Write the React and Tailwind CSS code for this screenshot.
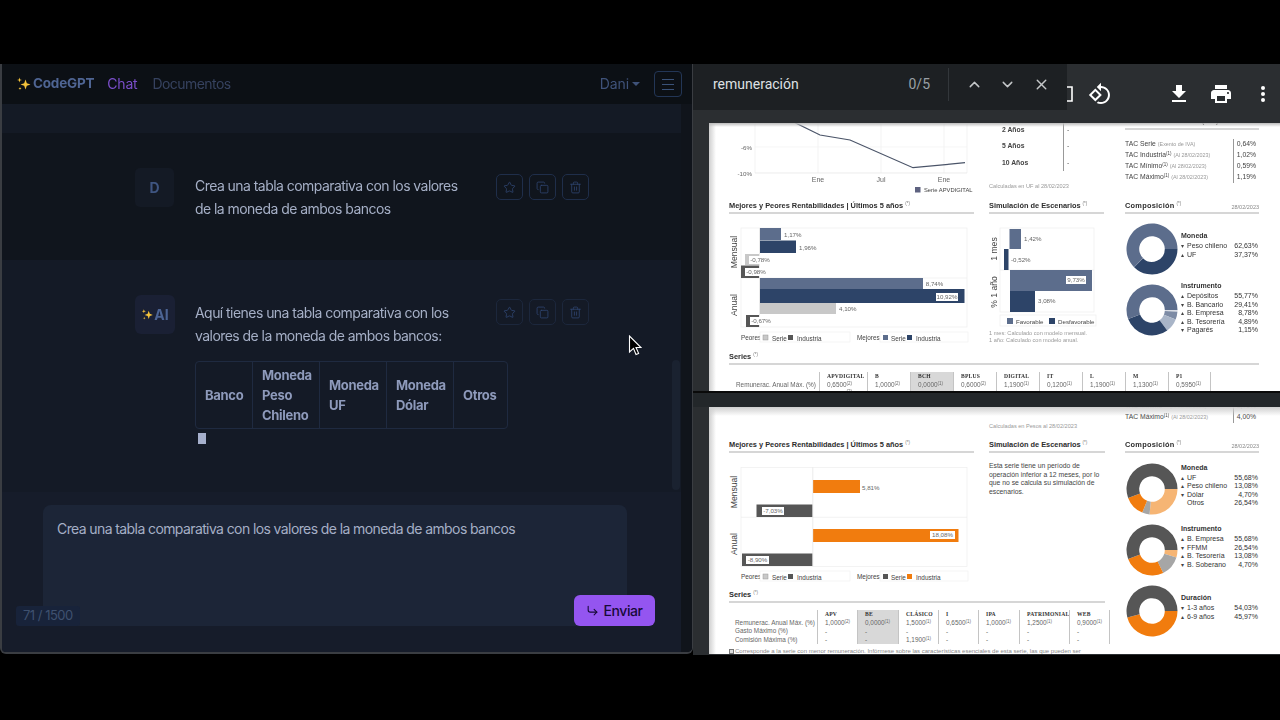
import React from "react";
import { Star, Copy, Trash2, ChevronUp, ChevronDown, X, CornerDownRight } from "lucide-react";

const point = (cx, cy, r, deg) => {
  const a = (deg * Math.PI) / 180;
  return [cx + r * Math.cos(a), cy + r * Math.sin(a)];
};
const arcPath = (cx, cy, R, r, a0, a1) => {
  const large = a1 - a0 > 180 ? 1 : 0;
  const [x0, y0] = point(cx, cy, R, a0);
  const [x1, y1] = point(cx, cy, R, a1);
  const [x2, y2] = point(cx, cy, r, a1);
  const [x3, y3] = point(cx, cy, r, a0);
  return `M${x0} ${y0}A${R} ${R} 0 ${large} 1 ${x1} ${y1}L${x2} ${y2}A${r} ${r} 0 ${large} 0 ${x3} ${y3}Z`;
};

function Donut({ segs }) {
  let a = 0;
  return (
    <svg width="52" height="52" viewBox="0 0 52 52" className="shrink-0">
      {segs.map(([p, c], i) => {
        const a0 = a;
        a += p * 3.6;
        return <path key={i} d={arcPath(26, 26, 25.5, 12.8, a0, a - 0.01)} fill={c} />;
      })}
    </svg>
  );
}

function DonutBlock({ segs, title, rows, className, top }) {
  return (
    <div className={`flex ${className}`}>
      <Donut segs={segs} />
      <div className={`ml-[3px] w-[77px] text-[7px] leading-[7.5px] text-[#333] ${top}`}>
        <div className="mb-[2px] font-bold leading-[8px]">{title}</div>
        {rows.map(([m, n, v]) => (
          <div key={n} className="flex justify-between">
            <span>
              <span className="inline-block w-[6px] text-[6px] text-[#444]">{m}</span>
              {n}
            </span>
            <span>{v}</span>
          </div>
        ))}
      </div>
    </div>
  );
}

function Heading({ children, note, right, className = "" }) {
  return (
    <div className={`relative flex h-[15px] items-center border-b-[2.5px] border-[#d6d6d6] text-[7.4px] font-bold text-[#2d2d2d] ${className}`}>
      <span>{children}</span>
      {note && <span className="ml-[2px] -mt-[3px] text-[4.5px] font-normal text-[#777]">(*)</span>}
      {right && <span className="ml-auto mt-[4px] text-[5.5px] font-normal text-[#888]">{right}</span>}
    </div>
  );
}

const Sup = ({ n }) => <sup className="text-[4.5px] leading-none">({n})</sup>;

function TacRow({ name, sup, note, value }) {
  return (
    <div className="flex h-[11px] items-center whitespace-nowrap text-[6.8px] text-[#444]">
      <span className="w-[108px] overflow-hidden">
        {name}
        {sup && <Sup n={sup} />} <span className="text-[5.4px] text-[#999]">{note}</span>
      </span>
      <span className="flex h-full w-[26px] items-center justify-end border-l border-[#999] pr-[3px]">{value}</span>
    </div>
  );
}

function SerieCol({ w, name, shade, rows }) {
  return (
    <div className={`shrink-0 ${w} border-l border-[#c4c4c4] pl-[7px] ${shade ? "bg-[#d8d8d8]" : ""}`}>
      <div className="h-[8px] whitespace-nowrap font-['Liberation_Serif',serif] text-[5.6px] font-bold leading-[8px] tracking-[0.2px] text-[#333]">{name}</div>
      {rows.map((r, i) => (
        <div key={i} className="h-[8.6px] whitespace-nowrap text-[6.4px] leading-[9px] text-[#666]">
          {r[0]}
          {r[1] && <Sup n={r[1]} />}
        </div>
      ))}
    </div>
  );
}

const NAVY = "#2d4468";
const SLATE = "#5c6d8c";
const LG = "#c8c8c8";
const DG = "#565656";
const OR = "#f17c0e";

const T = ({ x, y, children, size = 6.2, fill = "#666", anchor, weight }) => (
  <text x={x} y={y} fontSize={size} fill={fill} textAnchor={anchor} fontWeight={weight}>{children}</text>
);
const Label = ({ x, y, w = 21, children }) => (
  <g>
    <rect x={x} y={y} width={w} height={8} fill="#fff" />
    <T x={x + w / 2} y={y + 6} anchor="middle">{children}</T>
  </g>
);
const VT = ({ x, y, children }) => (
  <text transform={`translate(${x} ${y}) rotate(-90)`} fontSize="8.6" fill="#444" textAnchor="middle">{children}</text>
);

function ChartLegend({ y, a, b, c, d }) {
  return (
    <g>
      <T x={741} y={y + 2} size={6.4} fill="#444">Peores</T>
      <rect x={760} y={y - 6} width={90} height={10} fill="#fff" stroke="#efefef" strokeWidth="0.6" />
      <rect x={763} y={y - 3} width={5} height={5} fill={a} stroke="#999" strokeWidth="0.5" />
      <T x={772} y={y + 3} size={6.4} fill="#444">Serie</T>
      <rect x={788} y={y - 3} width={5} height={5} fill={b} />
      <T x={797} y={y + 3} size={6.4} fill="#444">Industria</T>
      <T x={857} y={y + 2} size={6.4} fill="#444">Mejores</T>
      <rect x={880} y={y - 6} width={88} height={10} fill="#fff" stroke="#efefef" strokeWidth="0.6" />
      <rect x={883} y={y - 3} width={5} height={5} fill={c} />
      <T x={891} y={y + 3} size={6.4} fill="#444">Serie</T>
      <rect x={907} y={y - 3} width={5} height={5} fill={d} />
      <T x={916} y={y + 3} size={6.4} fill="#444">Industria</T>
    </g>
  );
}

function Bar({ x0, x1, y0, y1, c }) {
  return <rect x={x0} y={y0} width={x1 - x0} height={y1 - y0} fill={c} />;
}

function PageOne() {
  const rows = (a, b) => [[a, b]];
  return (
    <div className="relative h-[268px] overflow-hidden bg-white pl-[20px] font-['Liberation_Sans',sans-serif]">
      <div className="flex h-[76px]">
        <svg width="260" height="76" viewBox="729 123 260 76" className="shrink-0">
          {[818, 881, 944, 967].map((x) => <line key={x} x1={x} x2={x} y1={123} y2={173} stroke="#eee" strokeWidth="0.7" />)}
          <line x1={755} x2={755} y1={123} y2={173} stroke="#eee" strokeWidth="0.7" />
          <line x1={755} x2={967} y1={173} y2={173} stroke="#e4e4e4" strokeWidth="0.7" />
          <line x1={755} x2={967} y1={147} y2={147} stroke="#f2f2f2" strokeWidth="0.7" />
          <polyline points="795,122.7 820,135 850,140 913,167.7 965,162.7" fill="none" stroke="#4a5468" strokeWidth="1.2" />
          <T x={752} y={149.5} anchor="end">-6%</T>
          <T x={752} y={176} anchor="end">-10%</T>
          <T x={818} y={182} size={7} anchor="middle">Ene</T>
          <T x={881} y={182} size={7} anchor="middle">Jul</T>
          <T x={944} y={182} size={7} anchor="middle">Ene</T>
          <rect x={915} y={187} width={5.5} height={5.5} fill="#5e6280" />
          <T x={924} y={192} size={5.8} fill="#444">Serie APVDIGITAL</T>
        </svg>
        <div className="mr-[21px] w-[115px] shrink-0">
          <div className="-mt-[1px] pl-[13px] text-[6.8px] font-bold text-[#444]">
            {["2 Años", "5 Años", "10 Años"].map((t) => (
              <div key={t} className="flex h-[16.3px] items-center">
                <span className="w-[61px]">{t}</span>
                <span className="flex h-full items-center border-l border-[#999] pl-[3px] font-normal">-</span>
              </div>
            ))}
          </div>
          <div className="mt-[11px] text-[5.6px] text-[#999]">Calculadas en UF al 28/02/2023</div>
        </div>
        <div className="w-[134px] shrink-0">
          <div className="-mt-[8px] h-[15px] border-b-[2px] border-[#d6d6d6] text-[7.4px] font-bold text-[#2d2d2d]">TAC Anual de Costos (IVA)</div>
          <div className="mt-[9px]">
            <TacRow name="TAC Serie" note="(Exento de IVA)" value="0,64%" />
            <TacRow name="TAC Industria" sup="1" note="(Al 28/02/2023)" value="1,02%" />
            <TacRow name="TAC Mínimo" sup="1" note="(Al 28/02/2023)" value="0,59%" />
            <TacRow name="TAC Máximo" sup="1" note="(Al 28/02/2023)" value="1,19%" />
          </div>
        </div>
      </div>
      <div className="flex h-[151px]">
        <div className="mr-[15px] w-[245px] shrink-0">
          <Heading note>Mejores y Peores Rentabilidades | Últimos 5 años</Heading>
          <svg width="245" height="130" viewBox="729 214 245 130" className="block">
            <rect x={741} y={228} width={226} height={99} fill="#fff" stroke="#eee" strokeWidth="0.7" />
            <line x1={741} x2={967} y1={278} y2={278} stroke="#eee" strokeWidth="0.7" />
            <Bar x0={760} x1={781} y0={228} y1={240} c={SLATE} />
            <Bar x0={760} x1={796} y0={240.5} y1={253} c={NAVY} />
            <Bar x0={745} x1={759} y0={254} y1={265} c={LG} />
            <Bar x0={741} x1={759} y0={265.5} y1={278} c={DG} />
            <Bar x0={760} x1={923} y0={278} y1={289} c={SLATE} />
            <Bar x0={760} x1={964.5} y0={289} y1={303} c={NAVY} />
            <Bar x0={760} x1={836} y0={303} y1={314} c={LG} />
            <Bar x0={746} x1={759} y0={315} y1={327} c={DG} />
            <line x1={759.5} x2={759.5} y1={228} y2={327} stroke="#ddd" strokeWidth="0.6" />
            <T x={784} y={237}>1,17%</T>
            <T x={799} y={250}>1,96%</T>
            <Label x={749} y={256} w={22}>-0,78%</Label>
            <Label x={745} y={268} w={22}>-0,98%</Label>
            <Label x={925} y={280} w={19}>8,74%</Label>
            <Label x={936} y={293} w={22}>10,92%</Label>
            <T x={839} y={311}>4,10%</T>
            <Label x={750} y={317} w={22}>-0,67%</Label>
            <VT x={737} y={252}>Mensual</VT>
            <VT x={737} y={305}>Anual</VT>
            <ChartLegend y={338} a={LG} b={DG} c={SLATE} d={NAVY} />
          </svg>
        </div>
        <div className="mr-[21px] w-[115px] shrink-0">
          <Heading note>Simulación de Escenarios</Heading>
          <svg width="115" height="114" viewBox="989 214 115 114" className="block">
            <rect x={1000} y={228} width={94} height={84} fill="#fff" stroke="#eee" strokeWidth="0.7" />
            <line x1={1000} x2={1094} y1={270} y2={270} stroke="#eee" strokeWidth="0.7" />
            <Bar x0={1009.5} x1={1021} y0={229} y1={249} c={SLATE} />
            <Bar x0={1004} x1={1008.5} y0={249} y1={270} c={NAVY} />
            <Bar x0={1010} x1={1092} y0={270} y1={291} c={SLATE} />
            <Bar x0={1010} x1={1035} y0={291} y1={312} c={NAVY} />
            <T x={1024} y={241}>1,42%</T>
            <T x={1011} y={262}>-0,52%</T>
            <Label x={1066} y={276} w={20}>9,73%</Label>
            <T x={1038} y={303}>3,08%</T>
            <VT x={997} y={249}>1 mes</VT>
            <VT x={997} y={292}>% 1 año</VT>
            <rect x={1000} y={315} width={96} height={11} fill="#fff" stroke="#eee" strokeWidth="0.7" />
            <rect x={1007} y={318} width={6} height={6} fill={SLATE} />
            <T x={1016} y={324} fill="#444">Favorable</T>
            <rect x={1049} y={318} width={6} height={6} fill={NAVY} />
            <T x={1058} y={324} fill="#444">Desfavorable</T>
          </svg>
          <div className="mt-[2px] text-[5.6px] leading-[6.5px] text-[#999]">
            <div>1 mes: Calculado con modelo mensual.</div>
            <div>1 año: Calculado con modelo anual.</div>
          </div>
        </div>
        <div className="w-[134px] shrink-0">
          <Heading note right="28/02/2023"><span className="tracking-[0.25px]">Composición</span></Heading>
          <div className="mt-[9px] pl-[1px]">
            <DonutBlock
              segs={[[37.37, NAVY], [62.63, SLATE]]}
              title="Moneda"
              rows={[["▾", "Peso chileno", "62,63%"], ["▴", "UF", "37,37%"]]}
              className="mb-[9px]"
              top="mt-[9px]"
            />
            <DonutBlock
              segs={[[1.15, "#d9dde5"], [4.89, "#7d8ba5"], [8.78, "#a9b5c8"], [29.41, NAVY], [55.77, SLATE]]}
              title="Instrumento"
              rows={[["▴", "Depósitos", "55,77%"], ["▾", "B. Bancario", "29,41%"], ["▴", "B. Empresa", "8,78%"], ["▴", "B. Tesorería", "4,89%"], ["▾", "Pagarés", "1,15%"]]}
              top="-mt-[2px]"
            />
          </div>
        </div>
      </div>
      <Heading note className="w-[530px]">Series</Heading>
      <div className="mt-[7px] flex h-[40px] text-[6.4px]">
        <div className="w-[90px] shrink-0 pl-[7px] pt-[8px] leading-[9px] text-[#666]">Remunerac. Anual Máx. (%)</div>
        <SerieCol w="w-[48px]" name="APVDIGITAL" rows={[["0,6500", "2"], ["0,6500", "2"]]} />
        <SerieCol w="w-[43px]" name="B" rows={rows("1,0000", "2")} />
        <SerieCol w="w-[43px]" name="BCH" shade rows={rows("0,0000", "1")} />
        <SerieCol w="w-[43px]" name="BPLUS" rows={rows("0,6000", "2")} />
        <SerieCol w="w-[43px]" name="DIGITAL" rows={rows("1,1900", "1")} />
        <SerieCol w="w-[43px]" name="IT" rows={rows("0,1200", "1")} />
        <SerieCol w="w-[43px]" name="L" rows={rows("1,1900", "1")} />
        <SerieCol w="w-[43px]" name="M" rows={rows("1,1300", "1")} />
        <SerieCol w="w-[42px]" name="P1" rows={rows("0,5950", "1")} />
        <div className="border-l border-[#c4c4c4]" />
      </div>
      <div className="absolute inset-y-0 left-0 w-[7px] bg-gradient-to-r from-[#cfcfcf] to-white" />
      <div className="absolute inset-x-0 top-0 h-[4px] bg-gradient-to-b from-[#bbb] to-transparent" />
    </div>
  );
}

function PageTwo() {
  const d = ["-", null];
  return (
    <div className="relative h-[247px] overflow-hidden bg-white pl-[20px] font-['Liberation_Sans',sans-serif]">
      <div className="flex">
        <div className="mr-[20px] w-[376px] shrink-0">
          <div className="h-[31px] pl-[260px] pt-[15px] text-[5.6px] leading-[8px] text-[#999]">Calculadas en Pesos al 28/02/2023</div>
          <div className="flex h-[150px]">
            <div className="mr-[15px] w-[245px] shrink-0">
              <Heading note>Mejores y Peores Rentabilidades | Últimos 5 años</Heading>
              <svg width="245" height="130" viewBox="729 453 245 130" className="block">
                <rect x={741} y={467.5} width={226} height={99} fill="#fff" stroke="#eee" strokeWidth="0.7" />
                <line x1={741} x2={967} y1={517.3} y2={517.3} stroke="#eee" strokeWidth="0.7" />
                <Bar x0={813} x1={860} y0={480} y1={493} c={OR} />
                <Bar x0={756.5} x1={812.5} y0={504.5} y1={517} c={DG} />
                <Bar x0={813} x1={958.5} y0={529} y1={542} c={OR} />
                <Bar x0={742} x1={812.5} y0={553.5} y1={566} c={DG} />
                <line x1={812.8} x2={812.8} y1={467.5} y2={566.5} stroke="#ddd" strokeWidth="0.6" />
                <T x={862} y={489.5}>5,81%</T>
                <Label x={762} y={507} w={22}>-7,03%</Label>
                <Label x={930} y={531} w={25}>18,08%</Label>
                <Label x={746} y={556} w={23}>-8,90%</Label>
                <VT x={737} y={492}>Mensual</VT>
                <VT x={737} y={544}>Anual</VT>
                <ChartLegend y={577} a={LG} b={DG} c={DG} d={OR} />
              </svg>
            </div>
            <div className="w-[116px] shrink-0">
              <Heading note>Simulación de Escenarios</Heading>
              <p className="mt-[9px] text-[6.8px] leading-[8.7px] text-[#444]">Esta serie tiene un período de operación inferior a 12 meses, por lo que no se calcula su simulación de escenarios.</p>
            </div>
          </div>
          <Heading note>Series</Heading>
          <div className="mt-[7px] flex h-[34px] text-[6.4px]">
            <div className="w-[88px] shrink-0 pl-[6px] pt-[8.6px] leading-[8.6px] text-[#666]">
              <div>Remunerac. Anual Máx. (%)</div>
              <div>Gasto Máximo (%)</div>
              <div>Comisión Máxima (%)</div>
            </div>
            <SerieCol w="w-[40px]" name="APV" rows={[["1,0000", "2"], d, d]} />
            <SerieCol w="w-[41px]" name="BE" shade rows={[["0,0000", "1"], d, d]} />
            <SerieCol w="w-[40px]" name="CLÁSICO" rows={[["1,5000", "1"], d, ["1,1900", "1"]]} />
            <SerieCol w="w-[40px]" name="I" rows={[["0,6500", "1"], d, d]} />
            <SerieCol w="w-[41px]" name="IPA" rows={[["1,0000", "1"], d, d]} />
            <SerieCol w="w-[50px]" name="PATRIMONIAL" rows={[["1,2500", "1"], d, d]} />
            <SerieCol w="w-[40px]" name="WEB" rows={[["0,9000", "1"], d, d]} />
            <div className="border-l border-[#c4c4c4]" />
          </div>
          <div className="mt-[4px] flex w-[520px] items-center whitespace-nowrap text-[6px] leading-[7px] text-[#888]">
            <span className="mr-[1px] h-[5px] w-[5px] shrink-0 border border-[#777] bg-[#ddd]" />
            Corresponde a la serie con menor remuneración. Infórmese sobre las características esenciales de esta serie, las que pueden ser
          </div>
        </div>
        <div className="w-[134px] shrink-0">
          <div className="-mt-[6px] h-[37px]">
            <TacRow name="TAC Mínimo" sup="1" note="(Al 28/02/2023)" value="3,75%" />
            <TacRow name="TAC Máximo" sup="1" note="(Al 28/02/2023)" value="4,00%" />
          </div>
          <Heading note right="28/02/2023"><span className="tracking-[0.25px]">Composición</span></Heading>
          <div className="mt-[9.5px] pl-[1px]">
            <DonutBlock
              segs={[[26.54, "#f6b574"], [4.7, "#a6a6a6"], [13.08, OR], [55.68, DG]]}
              title="Moneda"
              rows={[["▴", "UF", "55,68%"], ["▴", "Peso chileno", "13,08%"], ["▾", "Dólar", "4,70%"], ["", "Otros", "26,54%"]]}
              className="mb-[9.5px]"
              top="mt-[1px]"
            />
            <DonutBlock
              segs={[[4.7, "#f6b574"], [13.08, "#a6a6a6"], [26.54, OR], [55.68, DG]]}
              title="Instrumento"
              rows={[["▴", "B. Empresa", "55,68%"], ["▾", "FFMM", "26,54%"], ["▴", "B. Tesorería", "13,08%"], ["▾", "B. Soberano", "4,70%"]]}
              className="mb-[9px]"
              top="mt-[1px]"
            />
            <DonutBlock
              segs={[[45.97, OR], [54.03, DG]]}
              title="Duración"
              rows={[["▾", "1-3 años", "54,03%"], ["▴", "6-9 años", "45,97%"]]}
              top="mt-[9px]"
            />
          </div>
        </div>
      </div>
      <div className="absolute inset-y-0 left-0 w-[7px] bg-gradient-to-r from-[#cfcfcf] to-white" />
      <div className="absolute inset-x-0 top-0 h-[9px] bg-gradient-to-b from-[#cfcfcf] to-transparent" />
    </div>
  );
}

function Sparkle({ className }) {
  return (
    <svg viewBox="0 0 16 16" className={className}>
      <path d="M9.5 3.5 10.8 7.2 14.5 8.5 10.8 9.8 9.5 13.5 8.2 9.8 4.5 8.5 8.2 7.2Z" fill="#f5c33b" />
      <path d="M3.5 1.5 4.1 3.4 6 4 4.1 4.6 3.5 6.5 2.9 4.6 1 4 2.9 3.4Z" fill="#f5c33b" />
      <path d="M4 11 4.4 12.1 5.5 12.5 4.4 12.9 4 14 3.6 12.9 2.5 12.5 3.6 12.1Z" fill="#f5c33b" />
    </svg>
  );
}

function Actions({ dim }) {
  const cls = `flex h-[26px] w-[27px] items-center justify-center rounded-[5px] border ${dim ? "border-[#1c273c]" : "border-[#1f2e4a]"} text-[#2f4570]`;
  return (
    <div className="flex gap-[6px]">
      <div className={cls}><Star size={13} strokeWidth={1.5} /></div>
      <div className={cls}><Copy size={13} strokeWidth={1.5} /></div>
      <div className={cls}><Trash2 size={13} strokeWidth={1.5} /></div>
    </div>
  );
}

function LeftPanel() {
  const heads = [
    ["w-[56px]", ["Banco"]],
    ["w-[67px]", ["Moneda", "Peso", "Chileno"]],
    ["w-[67px]", ["Moneda", "UF"]],
    ["w-[67px]", ["Moneda", "Dólar"]],
    ["w-[54px]", ["Otros"]],
  ];
  return (
    <div className="flex h-[590px] w-[693px] shrink-0 flex-col overflow-hidden rounded-b-[6px] border-b-2 border-l-2 border-r border-[#3a3d42] bg-[#0f1319] font-['Inter',sans-serif] blur-[0.3px]">
      <div className="flex h-[40px] shrink-0 items-center bg-[#0c1015] pl-[14px] pr-[10px]">
        <Sparkle className="-mt-[1px] h-[16px] w-[16px]" />
        <span className="-mt-[1px] ml-[1px] text-[13.5px] font-bold tracking-[-0.2px] text-[#4f6593]">CodeGPT</span>
        <span className="-mt-[2px] ml-[13px] text-[14px] tracking-[-0.2px] text-[#7a4ec9]">Chat</span>
        <span className="-mt-[2px] ml-[15px] text-[14px] tracking-[-0.55px] text-[#36425f]">Documentos</span>
        <span className="ml-auto -mt-[1px] text-[14px] tracking-[-0.1px] text-[#3f5279]">Dani</span>
        <span className="ml-[3px] mr-[14px] h-0 w-0 border-x-[4px] border-t-[4px] border-x-transparent border-t-[#3f5279]" />
        <div className="flex h-[26px] w-[28px] flex-col items-center justify-center gap-[4px] rounded-[4px] border border-[#233656]">
          <span className="h-px w-[12px] bg-[#3a5278]" />
          <span className="h-px w-[12px] bg-[#3a5278]" />
          <span className="h-px w-[12px] bg-[#3a5278]" />
        </div>
      </div>
      <div className="flex min-h-0 flex-1">
        <div className="flex w-[679px] shrink-0 flex-col">
          <div className="h-[29px] shrink-0 bg-[#141a25]" />
          <div className="flex h-[127px] shrink-0 bg-[#10151d] pl-[133px] pt-[35px]">
            <div className="flex h-[39px] w-[39px] shrink-0 items-center justify-center rounded-[5px] bg-[#141a25] text-[14px] font-bold text-[#3f5581]">D</div>
            <p className="ml-[21px] mt-[6px] h-[46px] w-[270px] text-[14px] leading-[23px] tracking-[-0.55px] text-[#a5afc6]">Crea una tabla comparativa con los valores de la moneda de ambos bancos</p>
            <div className="ml-[31px] mt-[6px]"><Actions /></div>
          </div>
          <div className="relative flex h-[232px] shrink-0 bg-[#141a26] pl-[133px] pt-[35px]">
            <div className="flex h-[39px] w-[40px] shrink-0 items-center justify-center rounded-[6px] bg-[#1a2034] text-[14px] font-bold text-[#4c6494]">
              <Sparkle className="h-[13px] w-[13px]" />AI
            </div>
            <div className="ml-[20px] w-[313px] shrink-0 pt-[6px]">
              <p className="w-[270px] text-[14px] leading-[23px] tracking-[-0.55px] text-[#a5afc6]">Aquí tienes una tabla comparativa con los valores de la moneda de ambos bancos:</p>
              <div className="mt-[14px] flex h-[68px] rounded-[4px] border border-[#1f2a40]">
                {heads.map(([w, lines], i) => (
                  <div key={i} className={`flex ${w} shrink-0 flex-col justify-center ${i ? "border-l border-[#1f2a40]" : ""} pl-[9px] text-[13px] font-bold leading-[20px] tracking-[-0.3px] text-[#8e9abb]`}>
                    {lines.map((l) => <span key={l}>{l}</span>)}
                  </div>
                ))}
              </div>
              <div className="ml-[3px] mt-[4px] h-[11px] w-[8px] bg-[#a6b0cc]" />
            </div>
            <div className="-ml-[12px] mt-[4px]"><Actions dim /></div>
            <div className="absolute bottom-[2px] right-[1px] h-[130px] w-[8px] rounded-[4px] bg-[#1a2230]" />
          </div>
          <div className="relative flex-1 bg-[#161c2a] pl-[41px] pt-[13px]">
            <div className="h-[121px] w-[584px] rounded-t-[8px] bg-[#1c2537] px-[14px] py-[13px] text-[14px] leading-[22px] tracking-[-0.6px] text-[#a5afc6]">Crea una tabla comparativa con los valores de la moneda de ambos bancos</div>
            <div className="absolute left-[14px] top-[114px] flex h-[20px] items-center rounded-[3px] bg-[#18233a] pl-[7px] pr-[7px] text-[13px] tracking-[-0.5px] text-[#3f5170]">71 / 1500</div>
            <div className="absolute left-[572px] top-[103px] flex h-[31px] w-[81px] items-center justify-center gap-[4px] rounded-[6px] bg-[#9455f0] text-[14px] font-medium tracking-[-0.4px] text-[#170a38]">
              <CornerDownRight size={13} strokeWidth={2} />Enviar
            </div>
          </div>
        </div>
        <div className="flex-1 bg-[#10141b]" />
      </div>
    </div>
  );
}

function RightPanel() {
  return (
    <div className="relative flex h-[591px] w-[587px] shrink-0 flex-col overflow-hidden bg-[#2b2e31] font-['Roboto',sans-serif]">
      <div className="flex h-[59px] shrink-0 items-center justify-end pr-[5px] text-white">
        <svg width="6" height="16" viewBox="0 0 6 16" className="mr-[15px]" fill="none" stroke="#fff" strokeWidth="1.6"><path d="M0 1H5V15H0" /></svg>
        <svg width="24" height="24" viewBox="0 0 24 24" fill="#fff" className="mr-[55px]"><path d="M7.34 6.41L.86 12.9l6.49 6.48 6.49-6.48-6.5-6.49zM3.69 12.9l3.66-3.66L11 12.9l-3.66 3.66-3.65-3.66zm15.67-6.26C17.61 4.88 15.3 4 13 4V.76L8.76 5 13 9.24V6c1.79 0 3.58.68 4.95 2.05 2.73 2.73 2.73 7.17 0 9.9C16.58 19.32 14.79 20 13 20c-.97 0-1.94-.21-2.84-.61l-1.49 1.49C10.02 21.62 11.51 22 13 22c2.3 0 4.61-.88 6.36-2.64 3.52-3.51 3.52-9.21 0-12.72z" /></svg>
        <svg width="24" height="24" viewBox="0 0 24 24" fill="#fff" className="mr-[18px]"><path d="M19 9h-4V3H9v6H5l7 7 7-7zM5 18v2h14v-2H5z" /></svg>
        <svg width="24" height="24" viewBox="0 0 24 24" fill="#fff" className="mr-[18px]"><path d="M19 8H5c-1.66 0-3 1.34-3 3v6h4v4h12v-4h4v-6c0-1.66-1.34-3-3-3zm-3 11H8v-5h8v5zm3-7c-.55 0-1-.45-1-1s.45-1 1-1 1 .45 1 1-.45 1-1 1zm-1-9H6v4h12V3z" /></svg>
        <svg width="24" height="24" viewBox="0 0 24 24" fill="#fff"><circle cx="12" cy="6" r="2" /><circle cx="12" cy="12" r="2" /><circle cx="12" cy="18" r="2" /></svg>
      </div>
      <div className="shrink-0 pl-[16px] blur-[0.4px]"><PageOne /></div>
      <div className="h-[2px] shrink-0 bg-[#0a0a0a]" />
      <div className="h-[14px] shrink-0 bg-[#23272a]" />
      <div className="shrink-0 pl-[16px] blur-[0.4px]"><PageTwo /></div>
      <div className="absolute left-0 top-0 flex h-[46px] w-[374px] items-center bg-[#1d2023] pb-[6px] pl-[20px] text-[14px]">
        <span className="text-[#dfe1e3]">remuneración</span>
        <span className="ml-auto text-[#9aa0a6]">0/5</span>
        <span className="ml-[18px] h-[33px] w-px bg-[#33373b]" />
        <ChevronUp size={17} className="ml-[17px] text-[#c4c7c9]" />
        <ChevronDown size={17} className="ml-[16px] text-[#c4c7c9]" />
        <X size={17} className="ml-[17px] mr-[17px] text-[#c4c7c9]" />
      </div>
    </div>
  );
}

export default function App() {
  return (
    <div className="relative flex h-[720px] w-[1280px] overflow-hidden bg-black pt-[64px]">
      <LeftPanel />
      <RightPanel />
      <svg width="14" height="22" viewBox="0 0 14 22" className="absolute left-[628px] top-[335px]">
        <path d="M1.5 1V17L5.5 13.4 8 19.5 10.6 18.4 8 12.5H13Z" fill="#000" stroke="#fff" strokeWidth="1.1" />
      </svg>
    </div>
  );
}
